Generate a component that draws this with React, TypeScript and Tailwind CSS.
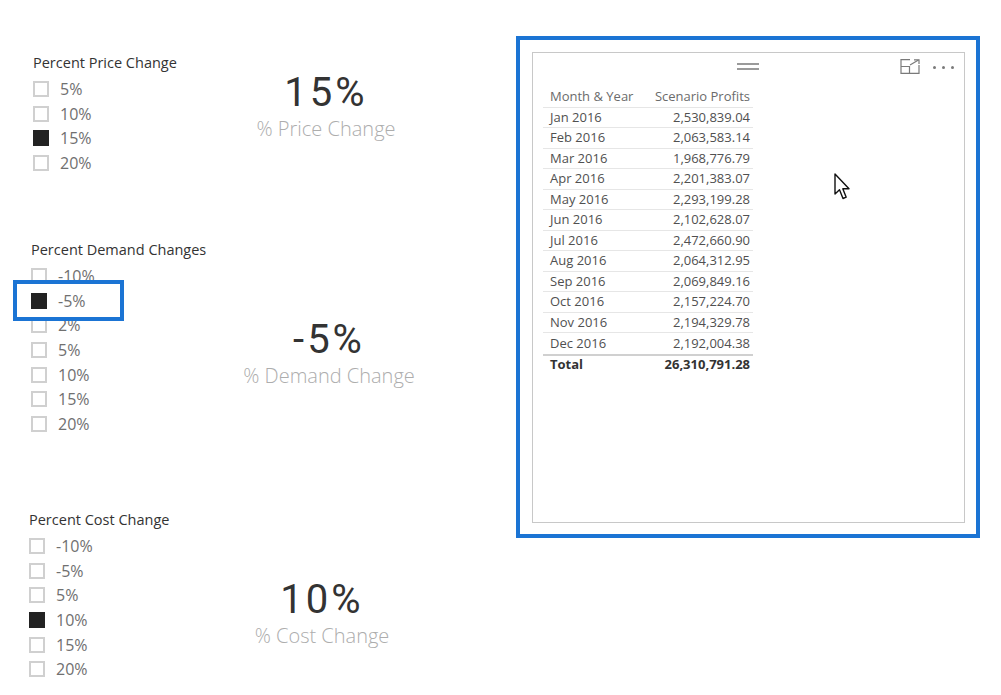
import React from "react";

type Item = { label: string; checked?: boolean };

function Slicer({ title, items }: { title: string; items: Item[] }) {
  return (
    <div className="flex flex-col">
      <div className="h-[22px] leading-[22px] text-[14.5px] text-[#333333] whitespace-nowrap">{title}</div>
      <div className="flex flex-col mt-[3px]">
        {items.map((it) => (
          <div key={it.label} className="flex items-center h-[24.6px]">
            <div
              className={
                it.checked
                  ? "w-[16px] h-[16px] bg-[#222222]"
                  : "w-[16px] h-[16px] border-2 border-[#d0d0d0] bg-white"
              }
            />
            <span className="ml-[11px] text-[16px] leading-[20px] text-[#707070] whitespace-nowrap">{it.label}</span>
          </div>
        ))}
      </div>
    </div>
  );
}

function Card({ value, label, pt }: { value: string; label: string; pt: string }) {
  return (
    <div className={`w-[200px] flex flex-col items-center ${pt}`}>
      <div className="h-[48px] leading-[48px] text-[40px] tracking-[3px] text-[#333333] font-['Roboto',sans-serif]">
        {value}
      </div>
      <div className="h-[24px] leading-[24px] text-[20px] text-[#adadad] whitespace-nowrap font-light">{label}</div>
    </div>
  );
}

const rows = [
  ["Jan 2016", "2,530,839.04"],
  ["Feb 2016", "2,063,583.14"],
  ["Mar 2016", "1,968,776.79"],
  ["Apr 2016", "2,201,383.07"],
  ["May 2016", "2,293,199.28"],
  ["Jun 2016", "2,102,628.07"],
  ["Jul 2016", "2,472,660.90"],
  ["Aug 2016", "2,064,312.95"],
  ["Sep 2016", "2,069,849.16"],
  ["Oct 2016", "2,157,224.70"],
  ["Nov 2016", "2,194,329.78"],
  ["Dec 2016", "2,192,004.38"],
];

function ExpandIcon() {
  return (
    <svg width="20" height="15" viewBox="0 0 20 15" fill="none" stroke="#7a7a7a" strokeWidth="1.2">
      <path d="M10 0.6 H1 V14.4 H19 V6" />
      <path d="M1 7.5 H9.5 V14.4" />
      <path d="M10 6 L18.5 1" />
      <path d="M14 0.8 H19 V5" />
    </svg>
  );
}

export default function App() {
  return (
    <div className="relative w-[1001px] h-[695px] bg-white overflow-hidden flex font-['Open_Sans','Noto_Sans',sans-serif]">
      {/* Left column */}
      <div className="w-[516px] flex flex-col">
        <div className="flex mt-[52px] h-[187px]">
          <div className="w-[226px] pl-[33px]">
            <Slicer
              title="Percent Price Change"
              items={[{ label: "5%" }, { label: "10%" }, { label: "15%", checked: true }, { label: "20%" }]}
            />
          </div>
          <Card value="15%" label="% Price Change" pt="pt-[17px]" />
        </div>
        <div className="flex h-[270px]">
          <div className="w-[229px] pl-[31px]">
            <Slicer
              title="Percent Demand Changes"
              items={[
                { label: "-10%" },
                { label: "-5%", checked: true },
                { label: "2%" },
                { label: "5%" },
                { label: "10%" },
                { label: "15%" },
                { label: "20%" },
              ]}
            />
          </div>
          <Card value="-5%" label="% Demand Change" pt="pt-[77px]" />
        </div>
        <div className="flex">
          <div className="w-[222px] pl-[29px]">
            <Slicer
              title="Percent Cost Change"
              items={[
                { label: "-10%" },
                { label: "-5%" },
                { label: "5%" },
                { label: "10%", checked: true },
                { label: "15%" },
                { label: "20%" },
              ]}
            />
          </div>
          <Card value="10%" label="% Cost Change" pt="pt-[67px]" />
        </div>
      </div>

      {/* Right column */}
      <div className="mt-[36px]">
        <div className="w-[464px] h-[502px] border-4 border-[#1b74d4] pt-[12px] pl-[12px]">
          <div className="w-[433px] h-[471px] border border-[#c8c8c8] bg-white flex flex-col">
            <div className="relative h-[30px]">
              <div className="absolute left-[204px] top-[10px] w-[22px] h-[2px] bg-[#9a9a9a]" />
              <div className="absolute left-[204px] top-[15px] w-[22px] h-[2px] bg-[#9a9a9a]" />
              <div className="absolute left-[367px] top-[6px]">
                <ExpandIcon />
              </div>
              <div className="absolute left-[400px] top-[13px] flex gap-[6px]">
                <div className="w-[3px] h-[3px] rounded-full bg-[#7a7a7a]" />
                <div className="w-[3px] h-[3px] rounded-full bg-[#7a7a7a]" />
                <div className="w-[3px] h-[3px] rounded-full bg-[#7a7a7a]" />
              </div>
            </div>
            <div className="ml-[10px] mt-[4px] w-[210px] text-[13px]">
              <div className="flex h-[20.5px] items-center border-b border-[#e6e6e6] text-[#6b6b6b]">
                <div className="w-[100px] pl-[7px] whitespace-nowrap">Month &amp; Year</div>
                <div className="flex-1 text-right pr-[3px] whitespace-nowrap">Scenario Profits</div>
              </div>
              {rows.map(([m, v], i) => (
                <div
                  key={m}
                  className={
                    i === rows.length - 1
                      ? "flex h-[20.5px] items-center text-[#505050]"
                      : "flex h-[20.5px] items-center border-b border-[#e6e6e6] text-[#505050]"
                  }
                >
                  <div className="w-[100px] pl-[7px] whitespace-nowrap">{m}</div>
                  <div className="flex-1 text-right pr-[3px] whitespace-nowrap">{v}</div>
                </div>
              ))}
              <div className="flex h-[20.5px] items-center border-t-2 border-[#d0d0d0] font-bold text-[#333333]">
                <div className="w-[100px] pl-[7px] whitespace-nowrap">Total</div>
                <div className="flex-1 text-right pr-[3px] whitespace-nowrap">26,310,791.28</div>
              </div>
            </div>
          </div>
        </div>
      </div>

      {/* Blue highlight around -5% */}
      <div className="absolute left-[13px] top-[280px] w-[111px] h-[41px] border-4 border-[#1b74d4]" />

      {/* Mouse cursor */}
      <svg className="absolute left-[834px] top-[173px]" width="18" height="28" viewBox="0 0 18 28">
        <path
          d="M1 1 L1 21 L5.5 16.8 L9 25.5 L12.2 24.2 L8.8 15.8 L15 15.8 Z"
          fill="white"
          stroke="#111"
          strokeWidth="1.4"
          strokeLinejoin="round"
        />
      </svg>
    </div>
  );
}
